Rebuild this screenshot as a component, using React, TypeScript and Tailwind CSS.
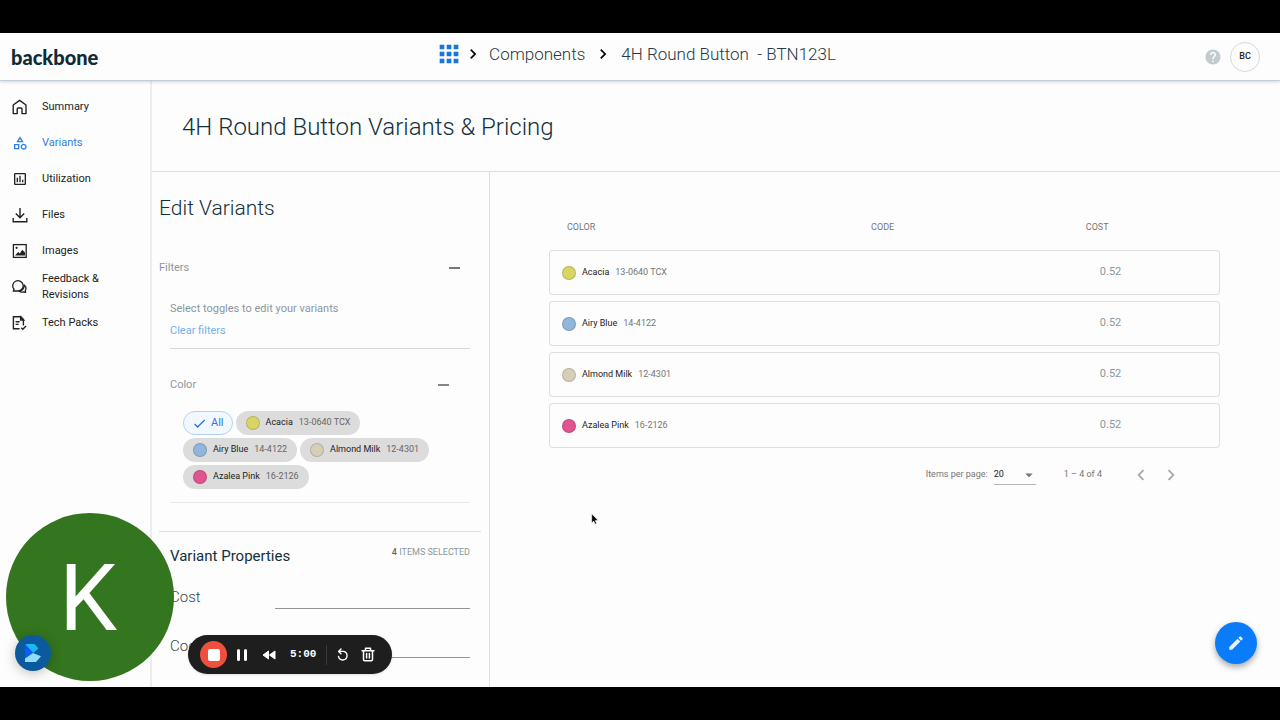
import { useState } from 'react';
import {
  MdApps,
  MdArrowDropDown,
  MdCheck,
  MdChevronLeft,
  MdChevronRight,
  MdEdit,
  MdHelp,
  MdOutlineAssessment,
  MdOutlineCategory,
} from 'react-icons/md';

const HomeIcon = () => (
  <svg width="16" height="16" viewBox="0 0 16 16" fill="none" stroke="currentColor" strokeWidth="1.4">
    <path d="M1.2 6 7.6 1.4 14 6v8.6h-4V10a1 1 0 0 0-1-1H6.200a1 1 0 0 0-1 1v4.6h-4z" strokeLinejoin="round" />
  </svg>
);

const DownloadIcon = () => (
  <svg width="16" height="16" viewBox="0 0 16 16" fill="none" stroke="currentColor" strokeWidth="1.4">
    <path d="M8 1v9.5M3.8 6.6 8 10.8l4.200-4.2M1.200 11v3.8h13.600V11" />
  </svg>
);

const ImagesIcon = () => (
  <svg width="16" height="16" viewBox="0 0 16 16" fill="none">
    <rect x="1.4" y="1.6" width="12.8" height="12.8" stroke="currentColor" strokeWidth="1.3" />
    <circle cx="4.6" cy="4.800" r="1.1" fill="currentColor" />
    <path d="M3 12.600 6.200 9l1.600 1.600 2.400-3.900 2.800 2.900v3z" fill="currentColor" />
  </svg>
);

const FeedbackIcon = () => (
  <svg width="16" height="16" viewBox="0 0 16 16" fill="none" stroke="currentColor" strokeWidth="1.3" strokeLinejoin="round">
    <path d="M3 12H1.200l.9-1.700a5.200 5.200 0 1 1 3.800 1.700z" />
    <path d="M12.200 6a4 4 0 0 1 1.100 5.300l.3 2.100-2-.6a4.600 4.600 0 0 1-4.600-.8c3.200-.1 5.300-2.600 5.200-6z" />
  </svg>
);

const TechPackIcon = () => (
  <svg width="16" height="16" viewBox="0 0 16 16" fill="none" stroke="currentColor" strokeWidth="1.4">
    <path d="M7.600 13.800H1.400V1.800h7.400l2.600 2.800v6" />
    <path d="M8.600 2v3h3zM3.600 6.800h4M3.600 9.400h3" />
    <path d="m9.200 12.800 1.600 1.500 3.200-3.200" />
  </svg>
);

const navItems = [
  { label: 'Summary', icon: <HomeIcon /> },
  { label: 'Variants', icon: <MdOutlineCategory size={16} />, active: true },
  { label: 'Utilization', icon: <MdOutlineAssessment size={16} /> },
  { label: 'Files', icon: <DownloadIcon /> },
  { label: 'Images', icon: <ImagesIcon /> },
  { label: 'Feedback & Revisions', icon: <FeedbackIcon /> },
  { label: 'Tech Packs', icon: <TechPackIcon /> },
];

const variants = [
  { name: 'Acacia', code: '13-0640 TCX', cost: '0.52', dot: 'bg-[#d8d565]' },
  { name: 'Airy Blue', code: '14-4122', cost: '0.52', dot: 'bg-[#92b6d9]' },
  { name: 'Almond Milk', code: '12-4301', cost: '0.52', dot: 'bg-[#d5cfba]' },
  { name: 'Azalea Pink', code: '16-2126', cost: '0.52', dot: 'bg-[#e2548f]' },
];

function Swatch({ color }: { color: string }) {
  return <span className={`h-3.5 w-3.5 shrink-0 rounded-full border border-black/15 ${color}`} />;
}

function Header() {
  return (
    <header className="relative z-10 grid h-12 grid-cols-[1fr_auto_1fr] items-center border-b border-[#c3ced4] bg-[#fdfdfd] pr-5 pl-[11px] shadow-[0_1px_3px_rgba(120,145,160,0.35)]">
      <a href="#home" className="font-[Lato,sans-serif] text-xl leading-6 font-black text-[#0d2c38]">
        backbone
      </a>
      <nav aria-label="Breadcrumb" className="flex items-center pb-1.5 text-[17px] leading-6 font-light text-[#263a43]">
        <a href="#apps" aria-label="Apps" className="text-[#1976d9]">
          <MdApps size={28} />
        </a>
        <MdChevronRight size={20} className="text-black" />
        <a href="#components" className="ml-1.5">Components</a>
        <MdChevronRight size={20} className="mx-2 text-black" />
        <span className="whitespace-pre">4H Round Button  - BTN123L</span>
      </nav>
      <div className="flex items-center justify-end gap-2">
        <button type="button" aria-label="Help" className="text-[#c3cbce]">
          <MdHelp size={18} />
        </button>
        <button type="button" className="h-[30px] w-[30px] rounded-full border border-[#d5d8da] text-[9px] font-medium text-[#222]">
          BC
        </button>
      </div>
    </header>
  );
}

function Sidebar() {
  return (
    <aside className="w-[152px] shrink-0 border-r-2 border-[#ebedee] pt-2">
      <ul>
        {navItems.map((item) => (
          <li key={item.label}>
            <a
              href={`#${item.label.split(' ')[0].toLowerCase()}`}
              className={`flex h-9 items-center gap-3.5 pl-3 text-[11px] leading-4 ${item.active ? 'text-[#2f80e4]' : 'text-[#222]'}`}
            >
              <span className="shrink-0">{item.icon}</span>
              <span className="w-16">{item.label}</span>
            </a>
          </li>
        ))}
      </ul>
    </aside>
  );
}

function EditPanel() {
  const [selected, setSelected] = useState('All');
  const [cost, setCost] = useState('');
  const [code, setCode] = useState('');

  return (
    <section className="w-[338px] shrink-0 border-r border-[#dcdfe1] pt-5 pr-2 pl-[7px]">
      <h2 className="text-[21px] leading-8 font-light text-[#12303c]">Edit Variants</h2>

      <button type="button" className="mt-8 flex h-6 w-full items-center justify-between pr-[21px] text-[11px] text-[#8b979e]">
        Filters
        <span className="h-0.5 w-[11px] bg-[#757575]" />
      </button>

      <div className="mx-[11px]">
        <div className="mt-[18px] border-b border-[#d4d6d8] pb-1.5 text-[11px]">
          <p className="h-[22px] leading-[22px] text-[#8b979e]">Select toggles to edit your variants</p>
          <button type="button" className="block h-[22px] leading-[22px] text-[#72b0e6]">Clear filters</button>
        </div>

        <div className="border-b border-[#e6e7e8] pb-[13px]">
          <button type="button" className="mt-6 flex h-6 w-full items-center justify-between pr-[21px] text-[11px] text-[#8b979e]">
            Color
            <span className="h-0.5 w-[11px] bg-[#858585]" />
          </button>
          <div className="mt-3.5 ml-[13px] flex flex-wrap gap-[3px]">
            <button
              type="button"
              aria-pressed={selected === 'All'}
              onClick={() => setSelected('All')}
              className="flex h-6 items-center gap-1 rounded-full border border-[#b1d1f3] bg-[#f3f8fe] px-2 text-[11px] text-[#2878d8]"
            >
              <MdCheck size={15} />
              All
            </button>
            {variants.map((v) => (
              <button
                key={v.name}
                type="button"
                aria-pressed={selected === v.name}
                onClick={() => setSelected(v.name)}
                className="flex h-6 items-center rounded-full bg-[#dcdcdc] px-2.5 text-[9px] text-[#666]"
              >
                <Swatch color={v.dot} />
                <span className="ml-1.5 text-[#222]">{v.name}</span>
                <span className="ml-1.5">{v.code}</span>
              </button>
            ))}
          </div>
        </div>
      </div>

      <div className="mt-7 border-t border-[#dcdfe1] px-[11px] pt-3">
        <div className="flex justify-between">
          <h3 className="text-[15px] leading-6 text-[#12303c]">Variant Properties</h3>
          <p className="text-[9px] leading-4 text-[#8b979e]">
            <span className="font-medium text-[#666]">4</span> ITEMS SELECTED
          </p>
        </div>
        <div className="mt-2 flex h-[33px] items-end justify-between">
          <label htmlFor="cost" className="pb-0.5 text-[15px] leading-5 font-light text-[#37474f]">Cost</label>
          <input
            id="cost"
            value={cost}
            onChange={(e) => setCost(e.target.value)}
            className="h-full w-[195px] border-b border-[#949494] bg-transparent text-sm outline-none"
          />
        </div>
        <div className="mt-4 flex h-[33px] items-end justify-between">
          <label htmlFor="code" className="pb-0.5 text-[15px] leading-5 font-light text-[#37474f]">Code</label>
          <input
            id="code"
            value={code}
            onChange={(e) => setCode(e.target.value)}
            className="h-full w-[195px] border-b border-[#949494] bg-transparent text-sm outline-none"
          />
        </div>
      </div>
    </section>
  );
}

function VariantTable() {
  return (
    <section className="flex-1 pt-[34px] pr-[60px] pl-[59px]">
      <table className="w-full table-fixed border-separate border-spacing-x-0 border-spacing-y-1.5 text-left">
        <thead>
          <tr className="h-8 text-[9px] text-[#757575]">
            <th className="w-[48%] pl-[18px] font-normal">COLOR</th>
            <th className="w-[32%] font-normal">CODE</th>
            <th className="w-1/5 font-normal">COST</th>
          </tr>
        </thead>
        <tbody>
          {variants.map((v) => (
            <tr key={v.name} className="h-[45px]">
              <td className="rounded-l border-y border-l border-[#dedede] pl-3 text-[9px] text-[#757575]">
                <div className="flex items-center">
                  <Swatch color={v.dot} />
                  <span className="ml-1.5 text-[#222]">{v.name}</span>
                  <span className="ml-1.5">{v.code}</span>
                </div>
              </td>
              <td className="border-y border-[#dedede]" />
              <td className="rounded-r border-y border-r border-[#dedede] pl-3.5 text-[11px] text-[#8b979e]">{v.cost}</td>
            </tr>
          ))}
        </tbody>
      </table>

      <div className="mt-2.5 flex items-center justify-end pr-[38px] text-[9px] text-[#757575]">
        <label htmlFor="page-size">Items per page:</label>
        <div className="relative ml-1.5 border-b border-[#b5b5b5]">
          <select id="page-size" defaultValue="20" className="h-[18px] w-[42px] appearance-none bg-transparent text-[#222] outline-none">
            <option>10</option>
            <option>20</option>
            <option>50</option>
          </select>
          <MdArrowDropDown size={18} className="pointer-events-none absolute top-0 -right-0.5" />
        </div>
        <span className="ml-7">1 – 4 of 4</span>
        <button type="button" aria-label="Previous page" className="ml-7 text-[#a8a8a8]">
          <MdChevronLeft size={22} />
        </button>
        <button type="button" aria-label="Next page" className="ml-2 text-[#a8a8a8]">
          <MdChevronRight size={22} />
        </button>
      </div>
    </section>
  );
}

function RecorderBar() {
  return (
    <div className="absolute bottom-[13px] left-[188px] z-20 flex h-[39px] w-[204px] items-center rounded-full bg-[#1e1e1e] pl-3 text-white shadow">
      <button type="button" aria-label="Stop" className="flex h-[27px] w-[27px] items-center justify-center rounded-full bg-[#ef4f3d]">
        <span className="h-3 w-3 rounded-xs bg-white" />
      </button>
      <button type="button" aria-label="Pause" className="ml-2.5 flex gap-1">
        <span className="h-3 w-[3px] rounded-xs bg-white" />
        <span className="h-3 w-[3px] rounded-xs bg-white" />
      </button>
      <button type="button" aria-label="Rewind" className="ml-[15px]">
        <svg width="14" height="10" viewBox="0 0 14 10" fill="currentColor" stroke="currentColor" strokeLinejoin="round">
          <path d="M6.500 1v8L1 5zM13 1v8L7.500 5z" />
        </svg>
      </button>
      <span className="ml-3.5 font-[Liberation_Mono,monospace] text-[11px] font-bold">5:00</span>
      <span className="mx-2.5 h-5 w-px bg-[#3a3a3a]" />
      <button type="button" aria-label="Restart">
        <svg width="12" height="13" viewBox="0 0 12 13" fill="none" stroke="currentColor" strokeWidth="1.4" strokeLinecap="round" strokeLinejoin="round">
          <path d="M4 1 1.600 3.400 4 5.800M1.800 3.400h4.600a4.300 4.300 0 1 1-4.900 5" />
        </svg>
      </button>
      <button type="button" aria-label="Delete" className="ml-3">
        <svg width="14" height="15" viewBox="0 0 14 15" fill="none" stroke="currentColor" strokeWidth="1.5" strokeLinecap="round" strokeLinejoin="round">
          <path d="M1 3.800h12M4.500 3.500V1.300h5v2.200M2.500 4v8.500c0 .8.500 1.300 1.300 1.300h6.400c.8 0 1.300-.5 1.300-1.300V4M5.600 6.500v4.500M8.400 6.500v4.500" />
        </svg>
      </button>
    </div>
  );
}

export default function App() {
  return (
    <div className="flex min-h-screen flex-col bg-black py-[33px] font-[Roboto,sans-serif]">
      <div className="relative flex flex-1 flex-col overflow-hidden bg-[#fdfdfd]">
        <Header />
        <div className="flex flex-1">
          <Sidebar />
          <main className="flex flex-1 flex-col">
            <div className="flex h-[91px] items-center border-b border-[#dcdfe1] pt-0.5 pl-[30px]">
              <h1 className="text-2xl font-light text-[#12303c]">4H Round Button Variants &amp; Pricing</h1>
            </div>
            <div className="flex flex-1">
              <EditPanel />
              <VariantTable />
            </div>
          </main>
        </div>

        {/* camera bubble and recorder controls float over the page */}
        <div className="absolute bottom-1.5 left-1.5 z-10 flex h-[168px] w-[168px] items-center justify-center rounded-full bg-[#34751f] pt-1 pr-1 text-[92px] leading-none text-white">
          K
        </div>
        <button
          type="button"
          aria-label="Open widget"
          className="absolute bottom-4 left-[15px] z-20 flex h-9 w-9 items-center justify-center rounded-full bg-[#0b5a9e] shadow-[0_2px_12px_rgba(0,0,0,0.25)]"
        >
          <svg width="18" height="20" viewBox="0 0 18 20">
            <path d="M1 1h9.500L14.500 5.500 9 10z" fill="#1cb8f5" />
            <path d="M1 1v14.500L9 10z" fill="#0a5cff" />
            <path d="M9 10 1 15.500V19h11l5-5.800z" fill="#8fdcff" />
          </svg>
        </button>
        <RecorderBar />
        <button
          type="button"
          aria-label="Edit"
          className="absolute right-[23px] bottom-[23px] z-20 flex h-[42px] w-[42px] items-center justify-center rounded-full bg-[#0a7cfa] text-[#e6f1fe] shadow-[0_3px_6px_rgba(0,0,0,0.35)]"
        >
          <MdEdit size={18} />
        </button>
        <svg className="absolute top-[480px] left-[591px] z-20" width="8" height="12" viewBox="0 0 8 12">
          <path d="M.7.800v9.200l2.100-1.900 1.300 3.100 1.500-.6-1.300-3.100h2.900z" fill="#000" stroke="#fff" strokeWidth=".6" />
        </svg>
      </div>
    </div>
  );
}
